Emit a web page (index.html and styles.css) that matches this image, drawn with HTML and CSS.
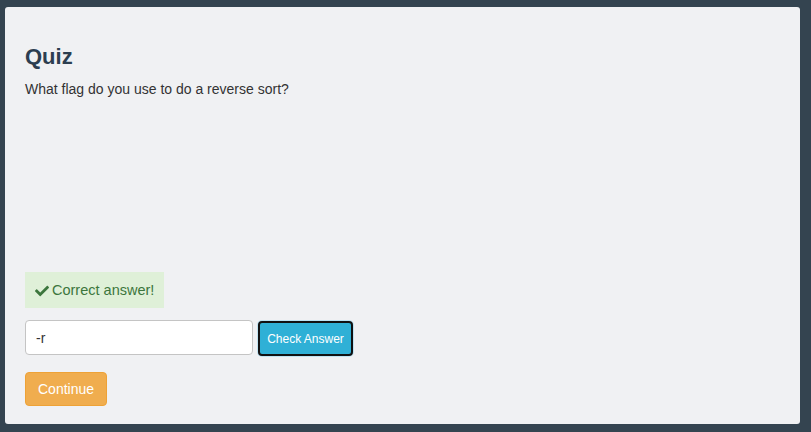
FILE: index.html
```html
<!DOCTYPE html>
<html>
<head>
<meta charset="utf-8">
<link rel="stylesheet" href="styles.css">
</head>
<body>
<div class="card">
  <h2 class="title">Quiz</h2>
  <p class="question">What flag do you use to do a reverse sort?</p>
  <div class="spacer"></div>
  <div class="alert">
    <svg class="check" viewBox="0 0 512 512" width="14" height="14"><path fill="currentColor" d="M173.898 439.404l-166.4-166.4c-9.997-9.997-9.997-26.206 0-36.204l36.203-36.204c9.997-9.998 26.207-9.998 36.204 0L192 312.69 432.095 72.596c9.997-9.997 26.207-9.997 36.204 0l36.203 36.204c9.997 9.997 9.997 26.206 0 36.204l-294.4 294.401c-9.998 9.997-26.207 9.997-36.204-.001z"/></svg>
    <span>Correct answer!</span>
  </div>
  <div class="form-row">
    <input class="answer" type="text" value="-r">
    <button class="btn-check">Check Answer</button>
  </div>
  <button class="btn-continue">Continue</button>
</div>
</body>
</html>
```

FILE: styles.css
```css
html, body {
  margin: 0;
  padding: 0;
}
body {
  background: #344450;
  font-family: "Liberation Sans", Arial, sans-serif;
  padding: 7px 11px 8px 5px;
  height: 432px;
  box-sizing: border-box;
}
.card {
  background: #f0f1f3;
  border-radius: 3px;
  height: 417px;
  box-sizing: border-box;
  padding: 20px 20px 0 20px;
  display: flex;
  flex-direction: column;
  align-items: flex-start;
}
.title {
  margin: 17px 0 0 0;
  font-size: 22px;
  line-height: 26px;
  font-weight: bold;
  color: #2c3e50;
}
.question {
  margin: 9px 0 0 0;
  font-size: 14px;
  line-height: 20px;
  color: #333;
}
.spacer {
  height: 173px;
}
.alert {
  display: flex;
  align-items: center;
  gap: 3px;
  background: #dff0d8;
  color: #3c763d;
  font-size: 14.5px;
  line-height: 20px;
  padding: 8px 10px 8px 10px;
  border-radius: 0;
}
.check {
  display: block;
  margin-top: 1px;
}
.form-row {
  display: flex;
  align-items: flex-start;
  margin-top: 12px;
}
.answer {
  width: 228px;
  height: 35px;
  box-sizing: border-box;
  border: 1px solid #c4c4c4;
  border-radius: 4px;
  background: #fff;
  font-family: "Liberation Sans", Arial, sans-serif;
  font-size: 14px;
  color: #333;
  padding: 0 10px;
  outline: none;
}
.btn-check {
  margin: 1px 0 0 5px;
  height: 35px;
  width: 95px;
  box-sizing: border-box;
  background: #2fb0d6;
  color: #fff;
  border: 2px solid #111;
  border-radius: 4px;
  font-family: "Liberation Sans", Arial, sans-serif;
  font-size: 12px;
  padding: 0;
  box-shadow: 0 0 0 1px #bfe3f2;
}
.btn-continue {
  margin-top: 16px;
  height: 34px;
  box-sizing: border-box;
  padding: 0 12px;
  background: #f0ad4e;
  border: 1px solid #eea236;
  border-radius: 4px;
  color: #fff;
  font-family: "Liberation Sans", Arial, sans-serif;
  font-size: 14px;
}
```
